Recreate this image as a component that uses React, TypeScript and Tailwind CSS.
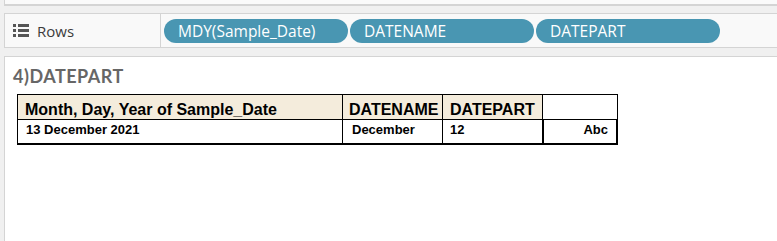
const pills = ['MDY(Sample_Date)', 'DATENAME', 'DATEPART'];

function RowsIcon() {
  return (
    <svg width="16" height="13" viewBox="0 0 16 13" className="shrink-0">
      <g fill="#555">
        <rect x="0" y="0" width="3" height="3" />
        <rect x="5" y="0" width="11" height="3" />
        <rect x="0" y="5" width="3" height="3" />
        <rect x="5" y="5" width="11" height="3" />
        <rect x="0" y="10" width="3" height="3" />
        <rect x="5" y="10" width="11" height="3" />
      </g>
    </svg>
  );
}

export default function App() {
  return (
    <div className="flex h-[241px] w-[777px] flex-col overflow-hidden bg-[#f0f0f0] font-['Open_Sans',sans-serif]">
      {/* Top strip */}
      <div className="ml-[4px] h-[6px] shrink-0 border-b-2 border-l border-[#d4d4d4] bg-[#fafafa]" />

      {/* Rows shelf */}
      <div className="ml-[4px] mt-[7px] flex h-[35px] shrink-0 border border-r-0 border-[#d4d4d4] bg-[#f9f9f9]">
        <div className="flex w-[156px] items-center gap-[8px] border-r border-[#d4d4d4] pl-[8px]">
          <RowsIcon />
          <span className="text-[15px] leading-[20px] text-[#3c3c3c]">Rows</span>
        </div>
        <div className="flex items-start gap-[2px] pl-[3px] pt-[5px]">
          {pills.map((p) => (
            <div
              key={p}
              className="flex h-[24px] w-[184px] items-center rounded-full bg-[#4996b2] pl-[14px] text-[15.5px] leading-[20px] text-white"
            >
              {p}
            </div>
          ))}
        </div>
      </div>

      {/* Sheet */}
      <div className="ml-[4px] mt-[8px] flex-1 border-l border-t border-[#d4d4d4] bg-white pl-[8px] pt-[8px]">
        <h1 className="font-['Lato',sans-serif] text-[18px] font-bold leading-[22px] tracking-[0.5px] text-[#666]">
          4)DATEPART
        </h1>

        <div className="ml-[4px] mt-[7px] w-[601px] border-l border-t border-black font-['Liberation_Sans',Arial,sans-serif] font-bold text-black">
          {/* Header */}
          <div className="grid h-[25px] grid-cols-[325px_100px_100px_75px] border-b border-black">
            <div className="flex items-end border-r border-black bg-[#f4ecdc] pl-[7px] text-[16px] leading-[18px]">
              Month, Day, Year of Sample_Date
            </div>
            <div className="flex items-end border-r border-black bg-[#f4ecdc] pl-[6px] text-[16px] leading-[18px]">
              DATENAME
            </div>
            <div className="flex items-end border-r border-black bg-[#f4ecdc] pl-[7px] text-[16px] leading-[18px]">
              DATEPART
            </div>
            <div className="border-r border-black bg-white" />
          </div>
          {/* Data row */}
          <div className="grid h-[25px] grid-cols-[325px_100px_99px_76px] border-b-2 border-black text-[13px] leading-[15px]">
            <div className="border-r border-black pl-[8px] pt-[2px]">13 December 2021</div>
            <div className="border-r border-black pl-[9px] pt-[2px]">December</div>
            <div className="pl-[7px] pt-[2px]">12</div>
            <div className="border-l-2 border-r-2 border-black pr-[8px] pt-[2px] text-right">Abc</div>
          </div>
        </div>
      </div>
    </div>
  );
}
